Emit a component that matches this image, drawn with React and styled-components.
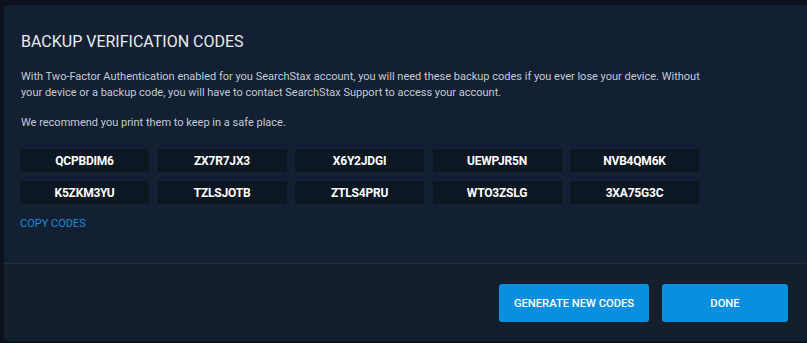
import React from "react";
import styled, { createGlobalStyle } from "styled-components";

const codes = [
  "QCPBDIM6",
  "ZX7R7JX3",
  "X6Y2JDGI",
  "UEWPJR5N",
  "NVB4QM6K",
  "K5ZKM3YU",
  "TZLSJOTB",
  "ZTLS4PRU",
  "WTO3ZSLG",
  "3XA75G3C",
];

const GlobalStyle = createGlobalStyle`
  html, body {
    margin: 0;
    background: #0b121b;
    font-family: Roboto, "Liberation Sans", sans-serif;
  }
`;

const Page = () => (
  <Backdrop>
    <Modal>
      <Body>
        <Title>Backup Verification Codes</Title>
        <Text>
          With Two-Factor Authentication enabled for you SearchStax account, you will need
          these backup codes if you ever lose your device. Without your device or a backup
          code, you will have to contact SearchStax Support to access your account.
        </Text>
        <Text $gap={14}>We recommend you print them to keep in a safe place.</Text>
        <CodeGrid>
          {codes.map(code => (
            <Code key={code}>{code}</Code>
          ))}
        </CodeGrid>
        <CopyLink href="#">Copy Codes</CopyLink>
      </Body>
      <Footer>
        <Button $width={150}>Generate New Codes</Button>
        <Button $width={126}>Done</Button>
      </Footer>
    </Modal>
  </Backdrop>
);

export default function App() {
  return (
    <>
      <GlobalStyle />
      <Page />
    </>
  );
}

const Backdrop = styled.div`
  height: 343px;
  box-sizing: border-box;
  padding: 5px 0 2px 4px;
  display: flex;
`;

const Modal = styled.div`
  flex: 1;
  display: flex;
  flex-direction: column;
  background: #141f2e;
  border-radius: 4px 0 0 4px;
  overflow: hidden;
`;

const Body = styled.div`
  background: #132034;
  padding: 27px 16px 32px 16px;
  border-bottom: 1px solid #232e36;
  display: flex;
  flex-direction: column;
  align-items: flex-start;
`;

const Title = styled.h2`
  margin: 0 0 0 1px;
  font-size: 16px;
  line-height: 20px;
  font-weight: 400;
  color: #e8ebee;
  text-transform: uppercase;
`;

const Text = styled.p`
  margin: ${props => props.$gap || 17}px 0 0 1px;
  max-width: 682px;
  font-size: 11px;
  line-height: 16px;
  color: #c4cad2;
`;

const CodeGrid = styled.div`
  margin-top: 18px;
  display: grid;
  grid-template-columns: repeat(5, 129px);
  column-gap: 8.5px;
  row-gap: 9px;
`;

const Code = styled.div`
  height: 23px;
  display: flex;
  align-items: center;
  justify-content: center;
  background: #0d1623;
  color: #ffffff;
  font-size: 12px;
  font-weight: 700;
  letter-spacing: -0.2px;
`;

const CopyLink = styled.a`
  margin-top: 13px;
  font-size: 11px;
  line-height: 14px;
  color: #1b8ad6;
  text-decoration: none;
  text-transform: uppercase;
`;

const Footer = styled.div`
  flex: 1;
  display: flex;
  justify-content: flex-end;
  align-items: flex-start;
  gap: 13px;
  padding: 20px 19px 0 0;
`;

const Button = styled.button`
  width: ${props => props.$width}px;
  height: 38px;
  border: none;
  border-radius: 3px;
  background: #0a8fdf;
  color: #ffffff;
  font-family: Roboto, "Liberation Sans", sans-serif;
  font-size: 11.2px;
  font-weight: 500;
  text-transform: uppercase;
  cursor: pointer;
`;
